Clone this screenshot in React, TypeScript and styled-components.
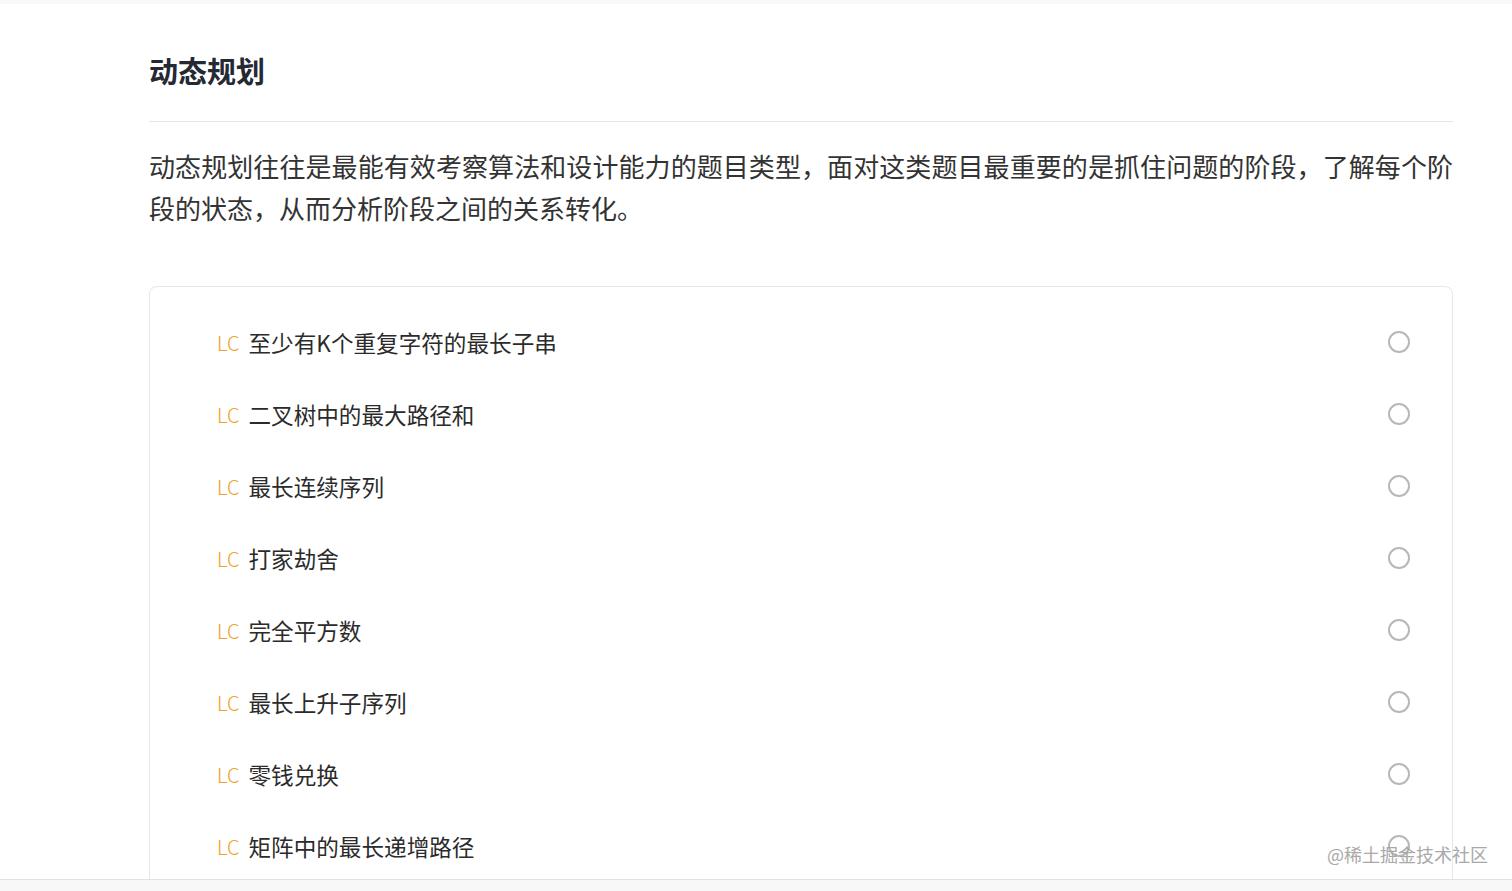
import React from "react";
import styled, { createGlobalStyle } from "styled-components";

const GlobalStyle = createGlobalStyle`
  html, body { margin: 0; padding: 0; background: #ffffff; }
  body { font-family: "Noto Sans CJK SC", "Noto Sans", sans-serif; }
  * { box-sizing: border-box; }
`;

const Page = styled.div`
  height: 891px;
  display: flex;
  flex-direction: column;
  position: relative;
  overflow: hidden;
`;

const TopStrip = styled.div`
  height: 4px;
  background: #f8f8f8;
  flex: none;
`;

const Content = styled.main`
  flex: 1;
  overflow: hidden;
  padding: 46px 59px 0 149px;
`;

const Heading = styled.h1`
  margin: 0;
  font-size: 29px;
  line-height: 40px;
  font-weight: 700;
  color: #252933;
`;

const Divider = styled.hr`
  margin: 31px 0 0;
  border: none;
  border-top: 1px solid #e4e6eb;
`;

const Intro = styled.p`
  margin: 23px 0 0;
  font-size: 26px;
  line-height: 42px;
  color: #333333;
  text-align: justify;
`;

const Card = styled.section`
  margin-top: 57px;
  border: 1px solid #e4e6eb;
  border-radius: 8px;
  padding: 19px 42px 60px 67px;
`;

const Row = styled.div`
  height: 72px;
  display: flex;
  align-items: center;
`;

const Tag = styled.span`
  font-size: 20px;
  font-weight: 300;
  color: #f0a020;
  margin-right: 9px;
`;

const Title = styled.span`
  flex: 1;
  font-size: 22.6px;
  color: #2b2b2b;
`;

const Radio = styled.span`
  width: 22px;
  height: 22px;
  border-radius: 50%;
  border: 2px solid #b8b8b8;
  flex: none;
`;

const BottomBar = styled.div`
  height: 12px;
  flex: none;
  border-top: 1px solid #e2e2e2;
  background: #f8f8f8;
`;

const Watermark = styled.div`
  position: absolute;
  right: 24px;
  bottom: 24px;
  font-size: 18px;
  color: #a0a0a0;
  opacity: 0.9;
`;

const problems = [
  "至少有K个重复字符的最长子串",
  "二叉树中的最大路径和",
  "最长连续序列",
  "打家劫舍",
  "完全平方数",
  "最长上升子序列",
  "零钱兑换",
  "矩阵中的最长递增路径",
];

export default function App() {
  return (
    <>
      <GlobalStyle />
      <Page>
        <TopStrip />
        <Content>
          <Heading>动态规划</Heading>
          <Divider />
          <Intro>
            动态规划往往是最能有效考察算法和设计能力的题目类型，面对这类题目最重要的是抓住问题的阶段，了解每个阶段的状态，从而分析阶段之间的关系转化。
          </Intro>
          <Card>
            {problems.map((p) => (
              <Row key={p}>
                <Tag>LC</Tag>
                <Title>{p}</Title>
                <Radio />
              </Row>
            ))}
          </Card>
        </Content>
        <BottomBar />
        <Watermark>@稀土掘金技术社区</Watermark>
      </Page>
    </>
  );
}
